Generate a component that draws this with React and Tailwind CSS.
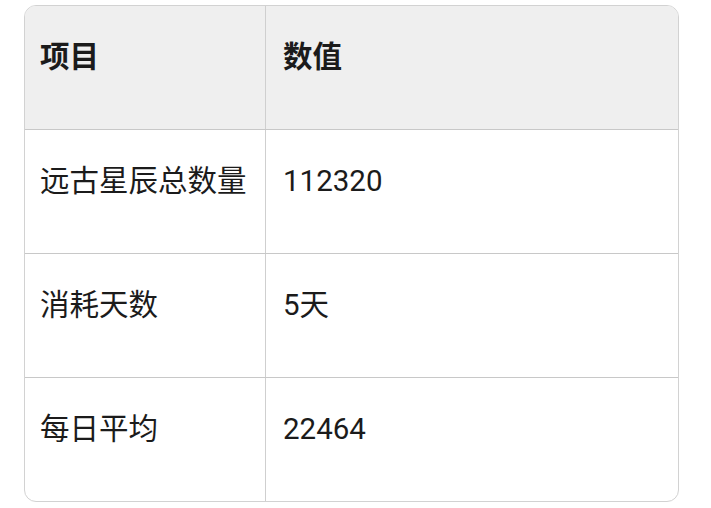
const rows = [
  ["远古星辰总数量", "112320"],
  ["消耗天数", "5天"],
  ["每日平均", "22464"],
];

const font = { fontFamily: 'Roboto, "Noto Sans CJK SC", sans-serif' };

export default function App() {
  return (
    <div className="w-[711px] h-[508px] bg-white pt-[5px] pl-[24px]" style={font}>
      <div className="w-[655px] border border-[#d2d2d2] rounded-[12px] overflow-hidden text-[29.5px] text-[#1b1b1b]">
        <div className="grid grid-cols-[241px_1fr] h-[123px] bg-[#efefef] font-bold">
          <div className="border-r border-[#cfcfcf] pl-[15px] pt-[31px] leading-[40px]">项目</div>
          <div className="pl-[17px] pt-[31px] leading-[40px]">数值</div>
        </div>
        {rows.map(([k, v]) => (
          <div key={k} className="grid grid-cols-[241px_1fr] h-[124px] border-t border-[#c8c8c8]">
            <div className="border-r border-[#cfcfcf] pl-[15px] pt-[31px] leading-[40px]">{k}</div>
            <div className="pl-[17px] pt-[31px] leading-[40px]">{v}</div>
          </div>
        ))}
      </div>
    </div>
  );
}
